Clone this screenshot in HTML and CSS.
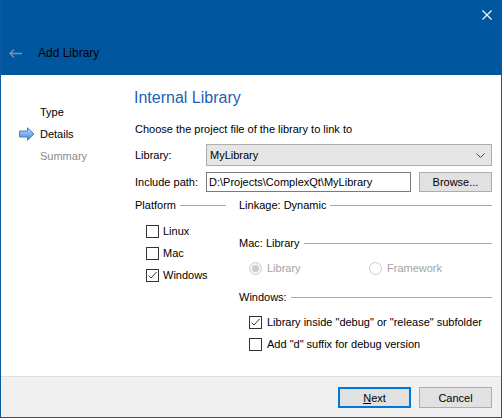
FILE: index.html
```html
<!DOCTYPE html>
<html lang="en">
<head>
<meta charset="utf-8">
<title>Add Library</title>
<link rel="stylesheet" href="styles.css">
</head>
<body>
<div class="window">
  <header class="titlebar">
    <div class="caption-row">
      <button class="close" aria-label="Close">
        <svg width="10" height="10" viewBox="0 0 10 10"><path d="M0.5 0.5 L9.5 9.5 M9.5 0.5 L0.5 9.5" stroke="#fff" stroke-width="1.1" fill="none"/></svg>
      </button>
    </div>
    <div class="title-row">
      <svg class="back" width="13" height="9" viewBox="0 0 13 9"><path d="M1 4.5 H13 M5 0.5 L1 4.5 L5 8.5" stroke="#8192a8" stroke-width="1.3" fill="none"/></svg>
      <span class="title-text">Add Library</span>
    </div>
  </header>

  <div class="content">
    <nav class="steps">
      <div class="step"><span class="step-icon"></span><span>Type</span></div>
      <div class="step current">
        <span class="step-icon">
          <svg width="16" height="14" viewBox="0 0 16 14">
            <defs>
              <linearGradient id="ag" x1="0" y1="0" x2="0" y2="1">
                <stop offset="0" stop-color="#b9d6f7"/>
                <stop offset="0.5" stop-color="#7fb0ea"/>
                <stop offset="1" stop-color="#4a86d4"/>
              </linearGradient>
            </defs>
            <path d="M0.5 4 H8.5 V0.8 L15 7 L8.5 13.2 V10 H0.5 Z" fill="url(#ag)" stroke="#4d7fbf" stroke-width="1"/>
          </svg>
        </span>
        <span>Details</span>
      </div>
      <div class="step pending"><span class="step-icon"></span><span>Summary</span></div>
    </nav>

    <main class="page">
      <h1 class="page-title">Internal Library</h1>
      <p class="desc">Choose the project file of the library to link to</p>

      <div class="form-row row-library">
        <label class="form-label">Library:</label>
        <div class="combo">
          <span>MyLibrary</span>
          <svg width="9" height="5" viewBox="0 0 9 5"><path d="M0.5 0.5 L4.5 4.5 L8.5 0.5" stroke="#444" stroke-width="1" fill="none"/></svg>
        </div>
      </div>

      <div class="form-row row-path">
        <label class="form-label">Include path:</label>
        <div class="text-input">D:\Projects\ComplexQt\MyLibrary</div>
        <button class="btn">Browse...</button>
      </div>

      <div class="groups">
        <section class="group platform">
          <div class="group-title"><span>Platform</span><i class="rule"></i></div>
          <div class="check-row"><span class="box"></span><span>Linux</span></div>
          <div class="check-row"><span class="box"></span><span>Mac</span></div>
          <div class="check-row"><span class="box"><svg width="11" height="11" viewBox="0 0 11 11"><path d="M1.5 5.5 L4 8 L9.5 2" stroke="#333" stroke-width="1" fill="none"/></svg></span><span>Windows</span></div>
        </section>

        <section class="group linkage">
          <div class="group-title"><span>Linkage: Dynamic</span><i class="rule"></i></div>

          <div class="group-title sub mac-title"><span>Mac: Library</span><i class="rule"></i></div>
          <div class="radio-row">
            <div class="radio-item first"><span class="radio checked"></span><span>Library</span></div>
            <div class="radio-item"><span class="radio"></span><span>Framework</span></div>
          </div>

          <div class="group-title sub win-title"><span>Windows:</span><i class="rule"></i></div>
          <div class="check-row win first-win"><span class="box"><svg width="11" height="11" viewBox="0 0 11 11"><path d="M1.5 5.5 L4 8 L9.5 2" stroke="#333" stroke-width="1" fill="none"/></svg></span><span>Library inside "debug" or "release" subfolder</span></div>
          <div class="check-row win"><span class="box"></span><span>Add "d" suffix for debug version</span></div>
        </section>
      </div>
    </main>
  </div>

  <footer class="footer">
    <button class="btn btn-default"><u>N</u>ext</button>
    <button class="btn">Cancel</button>
  </footer>
</div>
</body>
</html>
```

FILE: styles.css
```css
* { box-sizing: border-box; }

html, body {
  margin: 0;
  padding: 0;
  background: #ffffff;
}

body {
  font-family: "Liberation Sans", Arial, sans-serif;
  font-size: 11px;
  color: #000;
}

.window {
  width: 502px;
  height: 418px;
  display: flex;
  flex-direction: column;
  background: #fff;
  border-left: 1px solid #0b59a1;
  border-right: 1px solid #0b59a1;
  border-bottom: 1px solid #0b59a1;
}

/* ---------- title bar ---------- */
.titlebar {
  height: 75px;
  background: #00579f;
  flex: none;
}

.caption-row {
  height: 30px;
  display: flex;
  justify-content: flex-end;
  align-items: center;
  padding-right: 9px;
}

.close {
  width: 10px;
  height: 10px;
  padding: 0;
  margin: 0;
  border: 0;
  background: none;
  display: flex;
}

.title-row {
  height: 45px;
  display: flex;
  align-items: center;
  padding-left: 8px;
  padding-top: 1px;
}

.back { flex: none; }

.title-text {
  margin-left: 16px;
  font-size: 12px;
  color: #000;
}

/* ---------- content ---------- */
.content {
  flex: 1;
  display: flex;
  min-height: 0;
}

.steps {
  width: 134px;
  flex: none;
  padding-top: 26px;
  padding-left: 18px;
}

.step {
  height: 22px;
  display: flex;
  align-items: center;
}

.step-icon {
  width: 16px;
  height: 14px;
  margin-right: 5px;
  display: flex;
  flex: none;
}

.step.pending { color: #8c8c8c; }

.page {
  flex: 1;
  padding-right: 9px;
}

.page-title {
  margin: 13px 0 0 -1px;
  font-size: 16px;
  line-height: 20px;
  font-weight: normal;
  color: #1f5fb4;
}

.desc {
  margin: 13px 0 0 0;
  line-height: 16px;
}

.form-row {
  display: flex;
  align-items: center;
}

.form-label {
  width: 71px;
  flex: none;
}

.row-library {
  margin-top: 7px;
  height: 22px;
}

.combo {
  flex: 1;
  height: 22px;
  background: #e5e5e5;
  border: 1px solid #adadad;
  display: flex;
  align-items: center;
  justify-content: space-between;
  padding: 0 6px 0 3px;
}

.row-path {
  margin-top: 5px;
  height: 21px;
}

.text-input {
  flex: 1;
  height: 20px;
  border: 1px solid #7a7a7a;
  background: #fff;
  display: flex;
  align-items: center;
  padding-left: 2px;
}

.btn {
  font-family: inherit;
  font-size: 11px;
  color: #000;
  width: 73px;
  height: 21px;
  background: #e1e1e1;
  border: 1px solid #adadad;
  padding: 0;
  margin: 0;
}

.row-path .btn {
  margin-left: 8px;
  height: 20px;
}

.btn u { text-decoration: underline; }

/* ---------- groups ---------- */
.groups {
  margin-top: 5px;
  display: flex;
}

.group.platform {
  width: 91px;
  flex: none;
  margin-right: 13px;
}

.group.linkage {
  flex: 1;
}

.group-title {
  height: 16px;
  display: flex;
  align-items: center;
  white-space: nowrap;
}

.rule {
  flex: 1;
  height: 1px;
  background: #a9a9a9;
  margin-left: 4px;
}

.check-row {
  height: 22px;
  display: flex;
  align-items: center;
  padding-left: 11px;
}

.platform .check-row:nth-of-type(2) { margin-top: 7px; }

.box {
  width: 13px;
  height: 13px;
  border: 1px solid #333;
  background: #fff;
  margin-right: 4px;
  display: flex;
  align-items: center;
  justify-content: center;
  flex: none;
}

.mac-title { margin-top: 22px; }

.radio-row {
  margin-top: 6px;
  height: 22px;
  display: flex;
  align-items: center;
  padding-left: 10px;
  color: #a3a3a3;
}

.radio-item {
  display: flex;
  align-items: center;
}

.radio-item.first { width: 120px; }

.radio {
  width: 13px;
  height: 13px;
  border-radius: 50%;
  border: 1px solid #cccccc;
  background: #fff;
  margin-right: 5px;
  display: flex;
  align-items: center;
  justify-content: center;
}

.radio.checked { background: #f4f4f4; }

.radio.checked::after {
  content: "";
  width: 7px;
  height: 7px;
  border-radius: 50%;
  background: #cccccc;
}

.win-title { margin-top: 10px; }

.check-row.win { padding-left: 10px; }
.check-row.win .box { margin-right: 5px; }
.first-win { margin-top: 6px; }

/* ---------- footer ---------- */
.footer {
  height: 41px;
  flex: none;
  background: #f0f0f0;
  border-top: 1px solid #dfdfdf;
  display: flex;
  justify-content: flex-end;
  align-items: flex-start;
  gap: 8px;
  padding: 10px 9px 0 0;
}

.btn-default {
  border: 2px solid #0078d7;
}
```
